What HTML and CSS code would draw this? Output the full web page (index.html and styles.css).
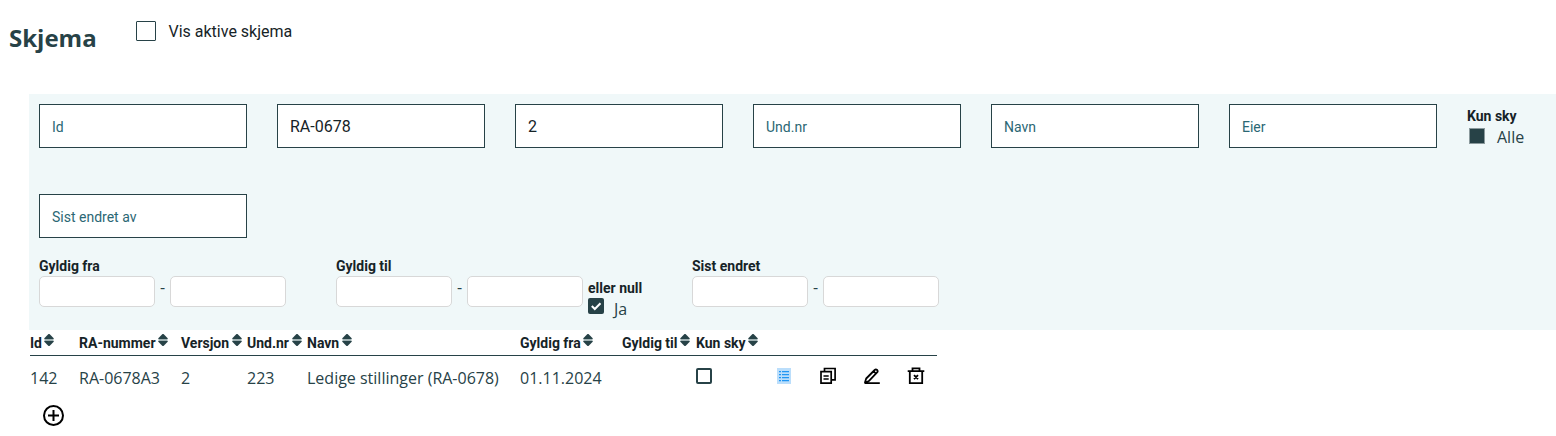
FILE: index.html
```html
<!DOCTYPE html>
<html lang="no">
<head>
<meta charset="utf-8">
<title>Skjema</title>
<link rel="stylesheet" href="styles.css">
</head>
<body>
<svg class="defs" width="0" height="0">
  <symbol id="sort" viewBox="0 0 10 12"><path d="M4.5 0h1L9.7 4.2V5H.3v-.8z" fill="#274247"/><path d="M.5 5h9v2h-9z" fill="#9fb0b2"/><path d="M.3 7h9.4v.8L5.5 12h-1L.3 7.8z" fill="#274247"/></symbol>
</svg>
<header class="header">
  <h1 class="title">Skjema</h1>
  <label class="active"><span class="bigbox"></span><span class="active-text">Vis aktive skjema</span></label>
</header>
<section class="filters">
  <div class="fields">
    <div class="field">Id</div>
    <div class="field filled">RA-0678</div>
    <div class="field filled">2</div>
    <div class="field">Und.nr</div>
    <div class="field">Navn</div>
    <div class="field">Eier</div>
    <div class="sky"><b class="label">Kun sky</b><div class="choice"><span class="square"></span><span class="choice-text">Alle</span></div></div>
    <div class="field">Sist endret av</div>
  </div>
  <div class="dates">
    <div class="range"><b class="label">Gyldig fra</b><div class="pair"><span class="date"></span><span class="dash">-</span><span class="date"></span></div></div>
    <div class="range"><b class="label">Gyldig til</b><div class="pair"><span class="date"></span><span class="dash">-</span><span class="date"></span></div></div>
    <div class="null"><b class="label">eller null</b><div class="choice"><svg class="checked" width="16" height="16" viewBox="0 0 16 16"><rect width="16" height="16" rx="2" fill="#274247"/><path d="m3.8 8 3 3 5.7-5.7" fill="none" stroke="#fff" stroke-width="2"/></svg><span class="choice-text">Ja</span></div></div>
    <div class="range"><b class="label">Sist endret</b><div class="pair"><span class="date"></span><span class="dash">-</span><span class="date"></span></div></div>
  </div>
</section>
<main class="table">
  <div class="row head">
    <span>Id<svg class="sort"><use href="#sort"/></svg></span>
    <span>RA-nummer<svg class="sort"><use href="#sort"/></svg></span>
    <span>Versjon<svg class="sort"><use href="#sort"/></svg></span>
    <span>Und.nr<svg class="sort"><use href="#sort"/></svg></span>
    <span>Navn<svg class="sort"><use href="#sort"/></svg></span>
    <span>Gyldig fra<svg class="sort"><use href="#sort"/></svg></span>
    <span>Gyldig til<svg class="sort"><use href="#sort"/></svg></span>
    <span>Kun sky<svg class="sort"><use href="#sort"/></svg></span>
  </div>
  <div class="row body">
    <span>142</span><span>RA-0678A3</span><span>2</span><span>223</span><span>Ledige stillinger (RA-0678)</span><span>01.11.2024</span><span></span>
    <span class="cell-check"><span class="smallbox"></span></span>
    <span class="actions">
      <svg width="18" height="18" viewBox="0 0 18 18"><path d="M2 1h14v16H2z" fill="#bbdefb"/><path d="M4 4h2v1.3H4zm3 0h7v1.3H7zM4 7h2v1.3H4zm3 0h7v1.3H7zM4 10h2v1.3H4zm3 0h7v1.3H7zM4 13h2v1.3H4zm3 0h7v1.3H7z" fill="#2196f3"/></svg>
      <svg width="18" height="18" viewBox="0 0 18 18" fill="none" stroke="#000" stroke-width="1.7"><path d="M5.5 4V1.5h10.6v11.3H13M2 4.6h10.2v11.6H2zM4.5 9h5.2M4.5 12h5.2"/></svg>
      <svg width="18" height="18" viewBox="0 0 18 18" fill="none" stroke="#000" stroke-width="1.8" stroke-linejoin="round"><path d="m1.8 16 1.4-4.5 8.5-8.5q1.2-1.2 2.4 0t0 2.4L5.8 14l-4 2M10.5 4.2l2.6 2.6M1.5 16.1h15.3"/></svg>
      <svg width="18" height="18" viewBox="0 0 18 18" fill="none" stroke="#000" stroke-width="1.8"><path d="M.7 4.2h16.6M5.5 4V1.3h7V4M2.8 4v12.2h12.4V4M7 8.2l4 4m0-4-4 4"/></svg>
    </span>
  </div>
</main>
<svg class="add" width="22" height="22" viewBox="0 0 22 22" fill="none" stroke="#000" stroke-width="2"><circle cx="10.5" cy="10.5" r="9.5"/><path d="M10.5 5v11M5 10.5h11"/></svg>
</body>
</html>
```
FILE: styles.css
```css
* { box-sizing: border-box; }
body { margin: 0; background: #fff; color: #274247; font: 16px/24px "Open Sans", sans-serif; overflow: hidden; }
svg { display: block; flex: none; }
.defs { position: absolute; }
.header { display: flex; height: 94px; padding-left: 9px; }
.title { margin: 20px 0 0; width: 127px; font-size: 24px; line-height: 36px; font-weight: 700; }
.active { display: flex; align-items: center; gap: 12px; height: 22px; margin-top: 20px; font: 16px/22px Roboto, sans-serif; color: #162327; }
.active-text { padding: 2px 0 0 .5px; }
.bigbox { width: 20px; height: 20px; border: 1px solid #274247; border-radius: 1px; background: #fff; }
.filters { margin-left: 29px; height: 236px; padding: 10px 0 0 10px; background: #f0f8f9; }
.fields { display: grid; grid-template-columns: repeat(6, 208px) 89px; column-gap: 30px; grid-auto-rows: 44px; row-gap: 46px; width: 1517px; }
.field { border: 1px solid #274247; background: #fff; padding: 2px 12px 0; font: 14px/40px Roboto, sans-serif; color: #2b6774; }
.filled { font-size: 16px; color: #162327; }
.sky { padding-top: 2px; }
.label { display: block; font: 700 14px/20px Roboto, sans-serif; color: #162327; white-space: nowrap; }
.choice { display: flex; }
.square { width: 16px; height: 16px; margin: 2px 12px 0 2px; background: #274247; border: 1px solid #8b9a9d; }
.choice-text { line-height: 22px; }
.dates { display: flex; margin-top: 18px; }
.range { width: 247px; margin-right: 50px; }
.pair { display: flex; }
.date { width: 116px; height: 31px; border: 1px solid #d8d8d8; border-radius: 5px; background: #fff; }
.dash { width: 15px; text-align: center; line-height: 22px; font-size: 16px; }
.null { width: 104px; margin: 22px 0 0 -45px; }
.null .choice-text { margin-left: 10px; }
.table { width: 907px; margin-left: 30px; }
.row { display: grid; grid-template-columns: 49px 102px 66px 60px 213px 102px 74px 79px 162px; white-space: nowrap; }
.head { height: 26px; border-bottom: 1px solid #274247; font: 700 14px/26px Roboto, sans-serif; color: #162327; }
.head span { display: flex; }
.sort { width: 10px; height: 12px; margin: 4px 0 0 2.5px; }
.body { height: 44px; line-height: 44px; }
.cell-check { padding-top: 12px; }
.smallbox { display: block; width: 16px; height: 16px; border: 2px solid #274247; border-radius: 2px; }
.actions { display: flex; gap: 26px; padding-top: 11px; }
.add { margin: 5px 0 0 43px; }
```
